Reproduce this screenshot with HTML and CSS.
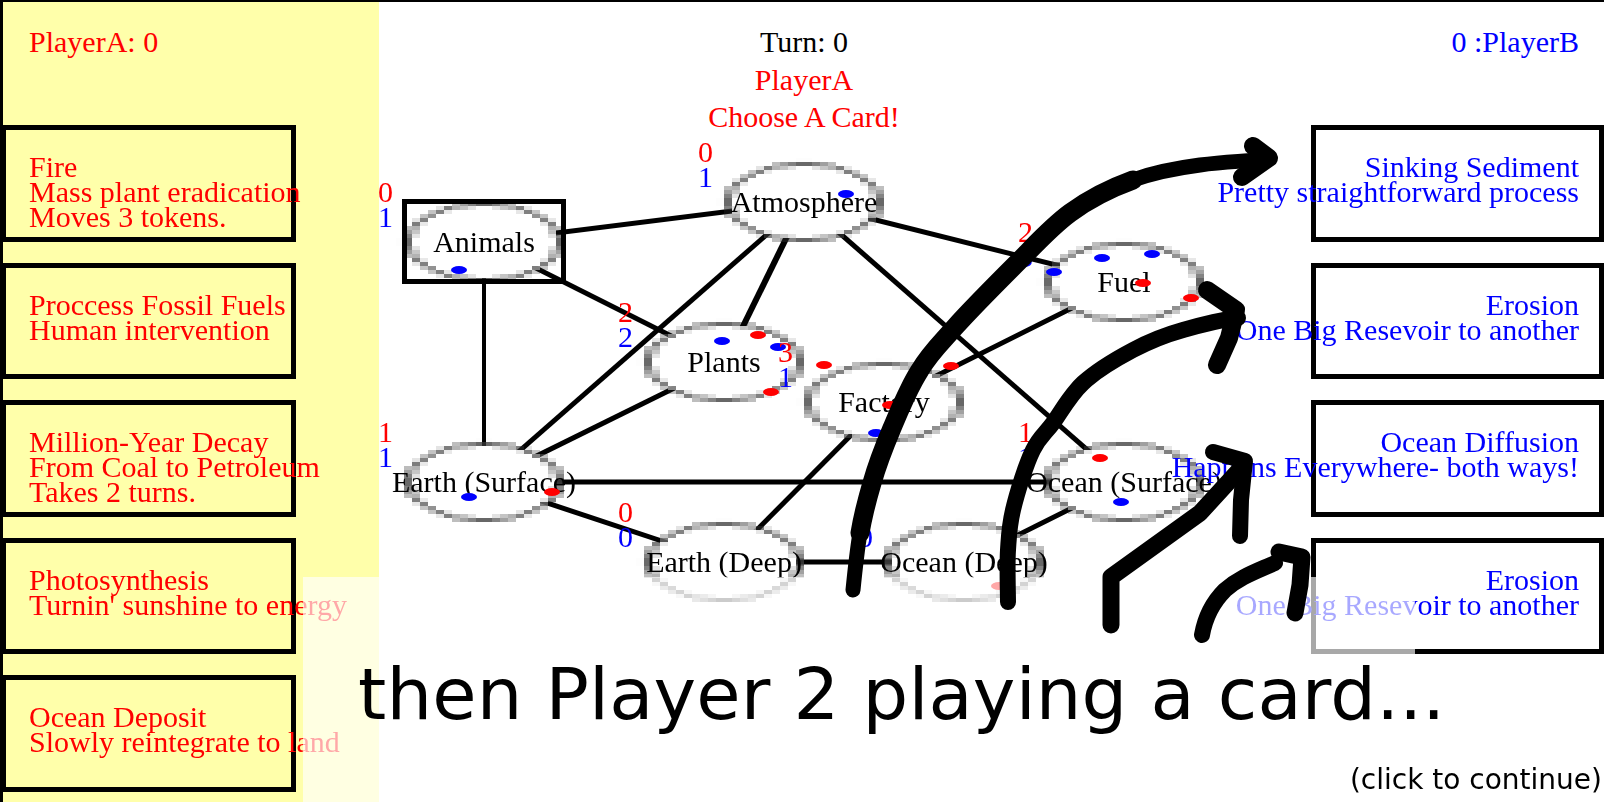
FILE: index.html
```html
<!DOCTYPE html>
<html lang="en">
<head>
<meta charset="utf-8">
<title>Carbon Game</title>
<link rel="stylesheet" href="styles.css">
</head>
<body>
<main class="stage">
  <aside class="panel panel-a">
    <header class="score">PlayerA: 0</header>
    <div class="cards">
      <article class="card"><span>Fire</span><span>Mass plant eradication</span><span>Moves 3 tokens.</span></article>
      <article class="card"><span>Proccess Fossil Fuels</span><span>Human intervention</span></article>
      <article class="card"><span>Million-Year Decay</span><span>From Coal to Petroleum</span><span>Takes 2 turns.</span></article>
      <article class="card"><span>Photosynthesis</span><span>Turnin' sunshine to energy</span></article>
      <article class="card"><span>Ocean Deposit</span><span>Slowly reintegrate to land</span></article>
    </div>
  </aside>
  <section class="status">
    <div class="turn">Turn: 0</div>
    <div class="red">PlayerA</div>
    <div class="red">Choose A Card!</div>
  </section>
  <aside class="panel panel-b">
    <header class="score">0 :PlayerB</header>
    <div class="cards">
      <article class="card"><span>Sinking Sediment</span><span>Pretty straightforward process</span></article>
      <article class="card"><span>Erosion</span><span>One Big Resevoir to another</span></article>
      <article class="card"><span>Ocean Diffusion</span><span>Happens Everywhere- both ways!</span></article>
      <article class="card"><span>Erosion</span><span>One Big Resevoir to another</span></article>
    </div>
  </aside>

  <div class="diagram">
    <svg class="layer links" width="1604" height="802" viewBox="0 0 1604 802">
      <g stroke="#000" stroke-width="5">
        <line x1="484" y1="242" x2="804" y2="202"/>
        <line x1="484" y1="242" x2="725" y2="363"/>
        <line x1="484" y1="242" x2="484" y2="482" stroke-width="4"/>
        <line x1="804" y1="202" x2="725" y2="363" stroke-width="6"/>
        <line x1="804" y1="202" x2="484" y2="482"/>
        <line x1="804" y1="202" x2="1124" y2="282"/>
        <line x1="804" y1="202" x2="1124" y2="482"/>
        <line x1="725" y1="363" x2="484" y2="482"/>
        <line x1="884" y1="402" x2="1124" y2="282"/>
        <line x1="884" y1="402" x2="725" y2="562"/>
        <line x1="484" y1="482" x2="1124" y2="482"/>
        <line x1="484" y1="482" x2="725" y2="562"/>
        <line x1="725" y1="562" x2="964" y2="562"/>
        <line x1="964" y1="562" x2="1124" y2="482"/>
      </g>
    </svg>
    <canvas id="rings" class="layer rings" width="200" height="200"></canvas>
    <div class="selected"></div>

    <div class="node n-animals"><span class="label">Animals</span><span class="count c-red">0</span><span class="count c-blue">1</span></div>
    <div class="node n-atmosphere"><span class="label">Atmosphere</span><span class="count c-red">0</span><span class="count c-blue">1</span></div>
    <div class="node n-plants"><span class="label">Plants</span><span class="count c-red">2</span><span class="count c-blue">2</span></div>
    <div class="node n-factory"><span class="label">Factory</span><span class="count c-red">3</span><span class="count c-blue">1</span></div>
    <div class="node n-fuel"><span class="label">Fuel</span><span class="count c-red">2</span><span class="count c-blue">3</span></div>
    <div class="node n-earth-s"><span class="label">Earth (Surface)</span><span class="count c-red">1</span><span class="count c-blue">1</span></div>
    <div class="node n-earth-d"><span class="label">Earth (Deep)</span><span class="count c-red">0</span><span class="count c-blue">0</span></div>
    <div class="node n-ocean-d"><span class="label">Ocean (Deep)</span><span class="count c-red">1</span><span class="count c-blue">0</span></div>
    <div class="node n-ocean-s"><span class="label">Ocean (Surface)</span><span class="count c-red">1</span><span class="count c-blue">1</span></div>

    <svg class="layer tokens" width="1604" height="802" viewBox="0 0 1604 802">
      <g fill="#00f">
        <ellipse cx="459" cy="270" rx="8" ry="4"/>
        <ellipse cx="722" cy="341" rx="8" ry="4"/>
        <ellipse cx="778" cy="347" rx="8" ry="4"/>
        <ellipse cx="876" cy="433" rx="8" ry="4"/>
        <ellipse cx="846" cy="194" rx="8" ry="4"/>
        <ellipse cx="1102" cy="258" rx="8" ry="4"/>
        <ellipse cx="1152" cy="254" rx="8" ry="4"/>
        <ellipse cx="1054" cy="272" rx="8" ry="4"/>
        <ellipse cx="469" cy="497" rx="8" ry="4"/>
        <ellipse cx="1121" cy="502" rx="8" ry="4"/>
      </g>
      <g fill="#f00">
        <ellipse cx="758" cy="335" rx="8" ry="4"/>
        <ellipse cx="771" cy="392" rx="8" ry="4"/>
        <ellipse cx="824" cy="365" rx="8" ry="4"/>
        <ellipse cx="951" cy="366" rx="8" ry="4"/>
        <ellipse cx="890" cy="405" rx="8" ry="4"/>
        <ellipse cx="1143" cy="283" rx="8" ry="4"/>
        <ellipse cx="1191" cy="298" rx="8" ry="4"/>
        <ellipse cx="552" cy="492" rx="8" ry="4"/>
        <ellipse cx="1100" cy="458" rx="8" ry="4"/>
        <ellipse cx="999" cy="586" rx="8" ry="4"/>
      </g>
    </svg>

    <div class="fade"></div>

    <svg class="layer scribble" width="1604" height="802" viewBox="0 0 1604 802">
      <g fill="none" stroke="#000" stroke-linecap="round" stroke-linejoin="round">
        <path stroke-width="15" d="M853 590C854 580 857 551 860 533C863 515 867 500 872 483C877 465 884 447 892 428C900 409 909 387 920 370C930 353 939 345 955 327C971 309 998 282 1017 263C1036 244 1051 227 1070 213C1089 199 1111 188 1133 180C1155 172 1177 168 1200 165C1222 162 1257 160 1268 160"/>
        <path stroke-width="19" d="M860 533C863 515 867 500 872 483C877 465 884 447 892 428C900 409 909 387 920 370C930 353 939 345 955 327C971 309 998 282 1017 263C1036 244 1051 227 1070 213C1089 199 1111 188 1133 180"/>
        <path stroke-width="18" d="M1253 146L1269 158L1242 177"/>
        <path stroke-width="16" d="M1008 602C1008 593 1007 565 1008 550C1009 535 1009 527 1013 510C1017 493 1026 464 1033 450C1040 436 1045 434 1053 423C1061 412 1070 395 1083 383C1096 371 1116 359 1133 350C1150 341 1165 335 1183 330C1200 325 1229 318 1238 318"/>
        <path stroke-width="18" d="M1207 290L1236 310L1229 338L1217 365"/>
        <path stroke-width="17" d="M1111 625L1111 577L1200 513L1243 466"/>
        <path stroke-width="16" d="M1213 452L1245 461L1241 500L1240 536"/>
        <path stroke-width="16" d="M1202 635C1205 618 1213 602 1225 590C1240 577 1255 572 1275 563"/>
        <path stroke-width="17" d="M1279 552L1302 557L1300 585L1295 613"/>
      </g>
    </svg>

    <p class="caption">then Player 2 playing a card...</p>
    <p class="continue">(click to continue)</p>
  </div>
</main>
<script src="script.js"></script>
</body>
</html>
```
FILE: styles.css
```css
* { box-sizing: border-box; }
html, body { margin: 0; padding: 0; background: #fff; }
body { width: 1604px; height: 802px; overflow: hidden; }

.stage {
  position: relative;
  display: flex;
  width: 1604px;
  height: 802px;
  overflow: hidden;
  border-top: 2px solid #000;
  border-left: 3px solid #000;
  font: 30px/25px "Liberation Serif", "Times New Roman", serif;
}

.panel { flex: none; }
.panel-a { width: 376px; background: #ffffaa; color: #f00; }
.panel-b { width: 293px; color: #00f; }

.score { height: 123px; padding: 27px 26px 0; }
.panel-b .score { padding: 27px 25px 0 0; text-align: right; }

.cards { display: flex; flex-direction: column; gap: 21px; }

.card {
  display: flex;
  flex-direction: column;
  height: 116.5px;
  padding: 24px 20px 0;
  border: 5px solid #000;
  white-space: nowrap;
}
.card span { position: relative; z-index: 6; }
.panel-a .card { width: 295px; margin-left: -2px; padding-left: 23px; }
.panel-b .card { align-items: flex-end; }

.status {
  flex: 1;
  padding: 21px 82px 0 0;
  text-align: center;
  line-height: 37.5px;
  color: #000;
}
.status .red { color: #f00; }

.diagram { position: absolute; left: -3px; top: -2px; width: 1604px; height: 802px; }
.layer { position: absolute; left: 0; top: 0; }

.links { z-index: 1; }
.rings {
  z-index: 2;
  left: 4px;
  top: 2px;
  width: 1600px;
  height: 800px;
  image-rendering: pixelated;
}
.selected {
  position: absolute;
  z-index: 3;
  left: 402px;
  top: 199px;
  width: 164px;
  height: 85px;
  border: 5px solid #000;
}

.node { position: absolute; width: 160px; height: 80px; }
.n-animals { left: 404px; top: 202px; }
.n-atmosphere { left: 724px; top: 162px; }
.n-plants { left: 644px; top: 322px; }
.n-factory { left: 804px; top: 362px; }
.n-fuel { left: 1044px; top: 242px; }
.n-earth-s { left: 404px; top: 442px; }
.n-earth-d { left: 644px; top: 522px; }
.n-ocean-d { left: 884px; top: 522px; }
.n-ocean-s { left: 1044px; top: 442px; }

.label {
  position: absolute;
  z-index: 4;
  left: -40px;
  width: 240px;
  top: 0;
  line-height: 80px;
  text-align: center;
  white-space: nowrap;
  color: #000;
}
.tokens { z-index: 5; }
.count { position: absolute; z-index: 6; right: 171px; line-height: 25px; }
.c-red { top: -23px; color: #f00; }
.c-blue { top: 2px; color: #00f; }

.fade {
  position: absolute;
  z-index: 7;
  left: 303px;
  top: 577px;
  width: 1112px;
  height: 225px;
  background: rgba(255, 255, 255, .66);
}
.scribble { z-index: 8; }

.caption, .continue {
  position: absolute;
  z-index: 9;
  margin: 0;
  font-family: "DejaVu Sans", Verdana, sans-serif;
  white-space: nowrap;
  color: #000;
}
.caption { left: 358px; top: 649px; font-size: 72px; line-height: 90px; letter-spacing: .16px; }
.continue { right: 2px; top: 762px; font-size: 28px; line-height: 36px; }
```
FILE: script.js
```js
// The board's rings are drawn on a 200x200 canvas stretched to 1600x800.
var ctx = document.getElementById('rings').getContext('2d');
var cells = [[50, 50], [90, 40], [80, 80], [100, 90], [130, 60], [50, 110], [80, 130], [110, 130], [130, 110]];
ctx.lineWidth = 0.6;
ctx.strokeStyle = '#000';
ctx.fillStyle = '#fff';
cells.forEach(function (c) {
  ctx.beginPath();
  ctx.arc(c[0] + 10, c[1] + 10, 9.6, 0, Math.PI * 2);
  ctx.fill();
  ctx.stroke();
});
```
